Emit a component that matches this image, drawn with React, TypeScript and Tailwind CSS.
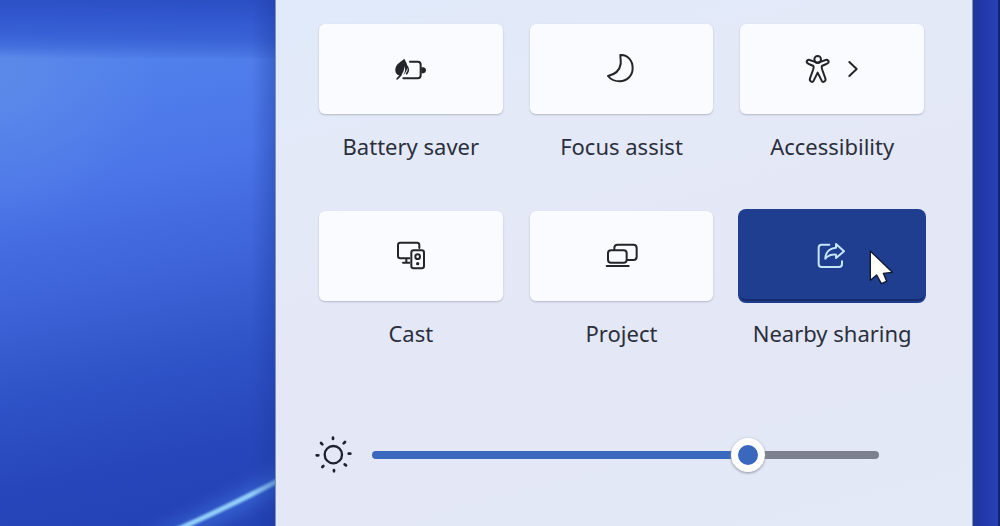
import { useState, type ReactNode } from 'react';
import { clsx } from 'clsx';

function BatterySaverIcon() {
  return (
    <svg viewBox="42 33 99 72" className="h-6 w-[33px]" fill="none" stroke="currentColor" strokeWidth="6" strokeLinecap="round">
      <path d="M90 47H113Q122 47 122 56V88Q122 97 113 97H70" />
      <path d="M124 64H131Q138 66 138 73Q138 80 131 82H124Z" fill="currentColor" stroke="none" />
      <path
        d="M73 38C65 47 48 52 46 69C45 79 50 87 58 88L50 97C47 101 51 103 54 100L64 89C68 81 73 73 74 61C77 71 75 80 70 87C78 81 80 72 82 66C84 56 77 47 73 38Z"
        fill="currentColor"
        stroke="none"
      />
      <path d="M79 59C87 66 86 76 80 83" strokeWidth="5" />
    </svg>
  );
}

function MoonIcon() {
  return (
    <svg viewBox="51 27 90 90" className="h-[30px] w-[30px]" fill="none" stroke="currentColor" strokeWidth="6" strokeLinejoin="round">
      <path d="M94 30C116 29 131 47 131 69C131 92 114 109 92 109C77 109 65 103 57 93C79 88 92 77 95 57C96 47 94 39 94 30Z" />
    </svg>
  );
}

function PersonIcon() {
  return (
    <svg viewBox="27 24 78 90" className="h-[30px] w-[26px]" fill="none" stroke="currentColor" strokeWidth="6" strokeLinejoin="round">
      <circle cx="65" cy="40" r="10" />
      <path d="M55 47L41 42C35 40 29 47 34 51C37 54 46 57 52 60C54 62 53 66 51 72L42 97C39 106 49 111 53 104L65 80L77 104C81 111 91 106 88 97L79 72C77 66 76 62 78 60C84 57 92 54 96 51C101 47 95 40 89 42L75 47C68 52 62 52 55 47Z" />
    </svg>
  );
}

function ChevronIcon() {
  return (
    <svg viewBox="153 42 36 54" className="h-[18px] w-3" fill="none" stroke="currentColor" strokeWidth="6" strokeLinecap="round" strokeLinejoin="round">
      <path d="M160 48L182 69L160 90" />
    </svg>
  );
}

function CastIcon() {
  return (
    <svg viewBox="33 27 90 90" className="h-[30px] w-[30px]" fill="none" stroke="currentColor" strokeWidth="6" strokeLinecap="round" strokeLinejoin="round">
      <path d="M103 48V39Q103 32 96 32H46Q39 32 39 39V72Q39 79 46 79H73M64 80V91M54 92H73" />
      <rect x="79" y="55" width="38" height="54" rx="7" />
      <circle cx="98" cy="74" r="7" />
      <circle cx="98" cy="95" r="5" fill="currentColor" stroke="none" />
    </svg>
  );
}

function ProjectIcon() {
  return (
    <svg viewBox="30 27 99 90" className="h-[30px] w-[33px]" fill="none" stroke="currentColor" strokeWidth="6" strokeLinecap="round" strokeLinejoin="round">
      <path d="M58 54V48Q58 38 68 38H115Q125 38 125 48V74Q125 84 115 84H97" />
      <rect x="39" y="55" width="56" height="37" rx="9" />
      <path d="M35 102H101" />
    </svg>
  );
}

function ShareIcon() {
  return (
    <svg viewBox="36 27 90 90" className="h-[30px] w-[30px]" fill="none" stroke="currentColor" strokeWidth="6" strokeLinecap="round" strokeLinejoin="round">
      <path d="M73 41H50Q41 41 41 50V99Q41 108 50 108H102Q111 108 111 99V91" />
      <path d="M93 39L117 61L93 81V71C78 70 68 74 61 83C61 65 73 52 93 50Z" />
    </svg>
  );
}

function SunIcon() {
  return (
    <svg viewBox="27 33 111 111" className="h-[37px] w-[37px] shrink-0 text-[#1c2030]" fill="none" stroke="currentColor" strokeWidth="7" strokeLinecap="round">
      <circle cx="82" cy="89" r="26" />
      <path d="M81 38V42M84 135V139M32 91H37M128 86H133M45 54L49 58M117 51L113 55M52 123L49 126M116 118L120 121" strokeWidth="8" />
    </svg>
  );
}

function Cursor() {
  return (
    <svg viewBox="192 50 78 108" className="pointer-events-none absolute top-[38px] left-[70%] h-9 w-[26px]" aria-hidden="true">
      <path d="M196 56V144L215 128L229 154L245 147L235 123L262 120Z" fill="#fffdf8" stroke="#10182f" strokeWidth="4" strokeLinejoin="round" />
    </svg>
  );
}

function Wallpaper() {
  return (
    <div className="absolute inset-0 -z-10 overflow-hidden bg-[#2440b4]" aria-hidden="true">
      <div className="absolute inset-y-0 left-0 w-[27.5%] bg-[linear-gradient(168deg,#5280ea_0%,#5080ec_16%,#4b75e8_34%,#3f66da_50%,#2f54c8_68%,#2746bb_84%,#2341b3_100%)]">
        <div className="absolute inset-0 bg-[radial-gradient(circle_at_0%_14%,#6793e6_0%,transparent_30%)] opacity-50" />
        <div className="relative h-[11%] bg-[linear-gradient(181deg,#2b4ec2_0%,#3157cf_30%,#3a63d6_65%,#4470de_82%,#4f7ce800_100%)]" />
        <svg viewBox="0 0 275 526" preserveAspectRatio="none" className="absolute inset-0 h-full w-full">
          <defs>
            <filter id="glow" x="-50%" y="-100%" width="200%" height="300%">
              <feGaussianBlur stdDeviation="9" />
            </filter>
            <filter id="soft">
              <feGaussianBlur stdDeviation="1" />
            </filter>
          </defs>
          <path d="M150 546Q225 512 290 475" stroke="#4b84ee" strokeWidth="18" fill="none" opacity="0.5" filter="url(#glow)" />
          <path d="M165 535Q225 509 285 477" stroke="#93d0fb" strokeWidth="5" fill="none" filter="url(#soft)" />
        </svg>
        <div className="absolute inset-y-0 right-0 w-6 bg-linear-to-r from-transparent to-[#1c3a9c]/40" />
      </div>
      <div className="absolute inset-y-0 right-0 w-7 border-r-2 border-[#14246e] bg-linear-to-r from-[#1f3698] via-[#2239ad] to-[#2543b6]" />
    </div>
  );
}

interface TileProps {
  id: string;
  label: string;
  active?: boolean;
  children: ReactNode;
}

function Tile({ id, label, active = false, children }: TileProps) {
  return (
    <div className="flex flex-col gap-4">
      <button
        type="button"
        aria-labelledby={id}
        aria-pressed={active}
        className={clsx(
          'relative flex h-[90px] items-center justify-center gap-4 rounded-md',
          active
            ? 'border-b-2 border-[#172b6c] bg-[#203e90] text-[#c3e6fb] ring-2 ring-[#203e90]'
            : 'bg-[#f9fbfe] text-[#23252b] shadow-[0_1px_2px_#b4b8c6]'
        )}
      >
        {children}
      </button>
      <span id={id} className="text-center text-[22px] leading-8 whitespace-nowrap text-[#2b2f3c]">
        {label}
      </span>
    </div>
  );
}

function BrightnessSlider() {
  const [value, setValue] = useState(76);

  return (
    <div className="mt-[87px] -ml-1 flex items-center gap-5 pr-[45px]">
      <SunIcon />
      <input
        type="range"
        aria-label="Brightness"
        min={0}
        max={100}
        value={value}
        onChange={(e) => setValue(Number(e.target.value))}
        style={{ backgroundImage: `linear-gradient(to right, #3968bd ${value - 2}%, #7d818f ${value - 2}%)` }}
        className="h-2 min-w-0 flex-1 appearance-none rounded-full [&::-webkit-slider-thumb]:h-[34px] [&::-webkit-slider-thumb]:w-[34px] [&::-webkit-slider-thumb]:appearance-none [&::-webkit-slider-thumb]:rounded-full [&::-webkit-slider-thumb]:border-[7px] [&::-webkit-slider-thumb]:border-white [&::-webkit-slider-thumb]:bg-[#3968bd] [&::-webkit-slider-thumb]:shadow-[0_1px_3px_#8b90a3]"
      />
    </div>
  );
}

export default function App() {
  return (
    <div className="relative isolate flex min-h-screen pr-[27px] pl-[27.5%] font-['Noto_Sans','Open_Sans',sans-serif]">
      <Wallpaper />
      <main className="min-w-0 flex-1 border-x border-[#7f92b8] bg-[#e4e9f7] bg-[linear-gradient(165deg,#e0eafa_0%,#e4e9f7_30%,#e4e7f6_60%,#e3e9f6_100%)] pt-6 pr-12 pl-[43px]">
        <div className="grid grid-cols-3 gap-x-[27px] gap-y-[49px]">
          <Tile id="battery-saver" label="Battery saver">
            <BatterySaverIcon />
          </Tile>
          <Tile id="focus-assist" label="Focus assist">
            <MoonIcon />
          </Tile>
          <Tile id="accessibility" label="Accessibility">
            <PersonIcon />
            <ChevronIcon />
          </Tile>
          <Tile id="cast" label="Cast">
            <CastIcon />
          </Tile>
          <Tile id="project" label="Project">
            <ProjectIcon />
          </Tile>
          <Tile id="nearby-sharing" label="Nearby sharing" active>
            <ShareIcon />
            <Cursor />
          </Tile>
        </div>
        <BrightnessSlider />
      </main>
    </div>
  );
}
